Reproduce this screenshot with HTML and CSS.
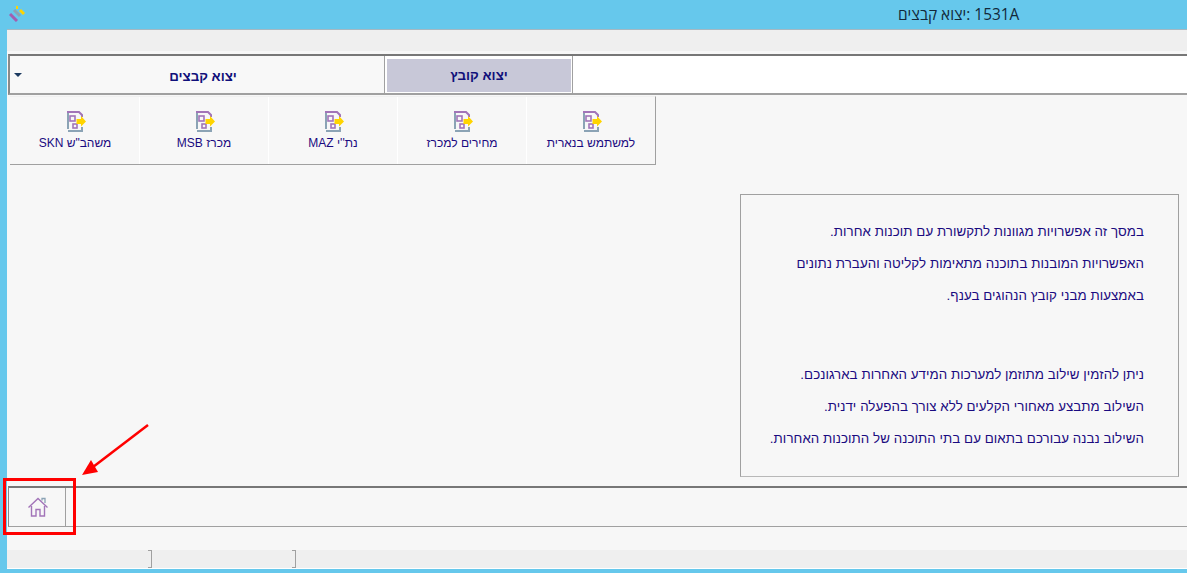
FILE: index.html
```html
<!DOCTYPE html>
<html lang="he">
<head>
    <meta charset="UTF-8">
    <title>1531A</title>
    <link rel="stylesheet" href="styles.css">
</head>
<body>

    <svg class="defs" width="0" height="0">
        <symbol id="export-icon" viewBox="0 0 20 21">
            <path d="M1 18V2" fill="none" stroke="#8ba3b5" stroke-width="2"/>
            <path d="M1 20H15V16" fill="none" stroke="#8ba3b5" stroke-width="2"/>
            <path d="M0 1H12L15 4V6" fill="none" stroke="#a274b8" stroke-width="2"/>
            <rect x="3" y="5" width="5" height="5" fill="none" stroke="#a274b8" stroke-width="1.6"/>
            <rect x="6" y="13" width="4" height="4" fill="none" stroke="#a274b8" stroke-width="1.6"/>
            <path d="M9.500 8H14V5L19 10.500L14 15.500V13H9.500Z" fill="#ffd400"/>
        </symbol>
    </svg>

    <div class="titlebar">
        <svg class="logo" width="18" height="17" viewBox="8 5 18 17">
            <path d="M10 14L17 21" stroke="#a25fb0" stroke-width="3"/>
            <path d="M14 10L20 16" stroke="#8ba3b5" stroke-width="3"/>
            <path d="M20 10L24 14" stroke="#ffd400" stroke-width="3"/>
            <path d="M17 6V9" stroke="#ffd400" stroke-width="2"/>
        </svg>
        <span class="window-title" dir="rtl">1531A :יצוא קבצים</span>
    </div>

    <div class="window">
        <div class="top-strip"></div>

        <div class="tabs">
            <div class="tab-group">
                <span class="caret"></span>
                <span dir="rtl">יצוא קבצים</span>
            </div>
            <div class="tab-active" dir="rtl">יצוא קובץ</div>
            <div class="tab-rest"></div>
        </div>

        <div class="tiles">
            <div class="tile"><svg width="20" height="21"><use href="#export-icon"/></svg><span dir="rtl">משהב"ש SKN</span></div>
            <div class="tile"><svg width="20" height="21"><use href="#export-icon"/></svg><span dir="rtl">מכרז MSB</span></div>
            <div class="tile"><svg width="20" height="21"><use href="#export-icon"/></svg><span dir="rtl">נת''י MAZ</span></div>
            <div class="tile"><svg width="20" height="21"><use href="#export-icon"/></svg><span dir="rtl">מחירים למכרז</span></div>
            <div class="tile"><svg width="20" height="21"><use href="#export-icon"/></svg><span dir="rtl">למשתמש בנארית</span></div>
        </div>

        <div class="content">
            <div class="info" dir="rtl">
                <p>במסך זה אפשרויות מגוונות לתקשורת עם תוכנות אחרות.</p>
                <p>האפשרויות המובנות בתוכנה מתאימות לקליטה והעברת נתונים</p>
                <p>באמצעות מבני קובץ הנהוגים בענף.</p>
                <p class="gap">ניתן להזמין שילוב מתוזמן למערכות המידע האחרות בארגונכם.</p>
                <p>השילוב מתבצע מאחורי הקלעים ללא צורך בהפעלה ידנית.</p>
                <p>השילוב נבנה עבורכם בתאום עם בתי התוכנה של התוכנות האחרות.</p>
            </div>
        </div>

        <div class="bottom-bar">
            <div class="home-btn">
                <svg width="22" height="22" viewBox="0 0 22 22">
                    <path d="M15 4.500V2.500H18V7" fill="none" stroke="#8ba3b5" stroke-width="1.300"/>
                    <path d="M1.500 11.500L11 2.500L20.500 11.500" fill="none" stroke="#a274b8" stroke-width="1.400"/>
                    <path d="M4.500 10V20H9V13.500H13V20H17.500V10" fill="none" stroke="#a274b8" stroke-width="1.400"/>
                </svg>
            </div>
        </div>

        <div class="status">
            <div class="status-cell first"></div>
            <div class="status-cell second"></div>
        </div>
    </div>

    <div class="mark-box"></div>
    <svg class="mark-arrow" width="80" height="60" viewBox="0 0 80 60">
        <path d="M68 2L13 44" stroke="#f00" stroke-width="2.500"/>
        <path d="M2 52L11 37L18 49Z" fill="#f00"/>
    </svg>

</body>
</html>
```

FILE: styles.css
```css
html, body {
    margin: 0;
    height: 573px;
    overflow: hidden;
}
body {
    position: relative;
    display: flex;
    flex-direction: column;
    background-color: #66c8ec;
    font-family: "Liberation Sans", Arial, sans-serif;
    font-size: 12px;
    color: #1a0a80;
}
p {
    margin: 0;
}
.defs {
    position: absolute;
}
.titlebar {
    height: 29px;
    flex: none;
    display: flex;
    align-items: center;
    padding-left: 8px;
}
.logo {
    margin-top: -2px;
}
.window-title {
    margin-left: 872px;
    font-family: "Open Sans", "Liberation Sans", sans-serif;
    font-size: 15.400px;
    color: #12283a;
}
.window {
    margin: 0 0 4px 7px;
    height: 538px;
    display: flex;
    flex-direction: column;
    background-color: #f7f7f7;
    border-top: 1px solid #a5b8c2;
    border-bottom: 1px solid #fff;
}
.top-strip {
    height: 21px;
    flex: none;
    background-color: #efefef;
}
.tabs {
    height: 37px;
    flex: none;
    margin: 3px 0 0 1px;
    display: flex;
    border-top: 2px solid #777;
    border-bottom: 2px solid #a0a0a0;
    border-left: 2px solid #8a8a8a;
    background-color: #fff;
    font-size: 13.330px;
    font-weight: bold;
    color: #10107a;
}
.tab-group {
    position: relative;
    width: 375px;
    display: flex;
    align-items: center;
    justify-content: center;
    background-color: #f8f8f8;
    border-right: 1px solid #a0a0a0;
    padding: 3px 0 0 12px;
    box-sizing: border-box;
}
.caret {
    position: absolute;
    left: 4px;
    top: 17px;
    border: 4px solid transparent;
    border-top: 4px solid #1c3a60;
}
.tab-active {
    width: 184px;
    margin: 3px 0 1px 2px;
    display: flex;
    align-items: center;
    justify-content: center;
    background-color: #c8c8d8;
    border-right: 1px solid #fff;
}
.tab-rest {
    flex: 1;
    border-left: 1px solid #a0a0a0;
}
.tiles {
    width: 644px;
    height: 67px;
    flex: none;
    margin: 1px 0 0 3px;
    padding-left: 1px;
    display: flex;
    border-top: 1px solid #f0f0f0;
    border-right: 1px solid #a0a0a0;
    border-bottom: 1px solid #a0a0a0;
}
.tile {
    width: 129px;
    flex: none;
    display: flex;
    flex-direction: column;
    align-items: center;
    gap: 4px;
    padding-top: 14px;
    box-sizing: border-box;
    border-right: 1px solid #fff;
}
.tile svg {
    margin-left: 4px;
}
.tile:last-child {
    width: 128px;
    border-right: none;
}
.content {
    flex: 1;
    display: flex;
    justify-content: flex-end;
    padding: 29px 8px 0 0;
}
.info {
    width: 439px;
    height: 283px;
    box-sizing: border-box;
    padding: 21px 34px 0 0;
    border: 1px solid #a0a0a0;
    border-bottom-color: #b8b8b8;
    font-size: 13.330px;
    letter-spacing: 0.05px;
    line-height: 32px;
}
.gap {
    margin-top: 47px;
}
.bottom-bar {
    height: 38px;
    flex: none;
    margin: 0 0 23px 1px;
    display: flex;
    border-top: 2px solid #777;
    border-bottom: 1px solid #a0a0a0;
    border-left: 1px solid #8a8a8a;
}
.home-btn {
    width: 57px;
    display: flex;
    align-items: center;
    justify-content: center;
    padding-left: 2px;
    box-sizing: border-box;
    border-right: 1px solid #a0a0a0;
}
.status {
    height: 18px;
    flex: none;
    display: flex;
    background-color: #efefef;
}
.status-cell {
    height: 18px;
    box-sizing: border-box;
    border-top: 1px solid #a0a0a0;
    border-right: 1px solid #a0a0a0;
    border-bottom: 1px solid #a0a0a0;
    border-image: linear-gradient(to right, transparent 97%, #a0a0a0 97%) 1;
}
.first {
    width: 145px;
}
.second {
    width: 144px;
}
/* red annotation over the screenshot */
.mark-box {
    position: absolute;
    left: 3px;
    top: 478px;
    width: 67px;
    height: 51px;
    border: 3px solid #f00;
}
.mark-arrow {
    position: absolute;
    left: 80px;
    top: 423px;
}
```
